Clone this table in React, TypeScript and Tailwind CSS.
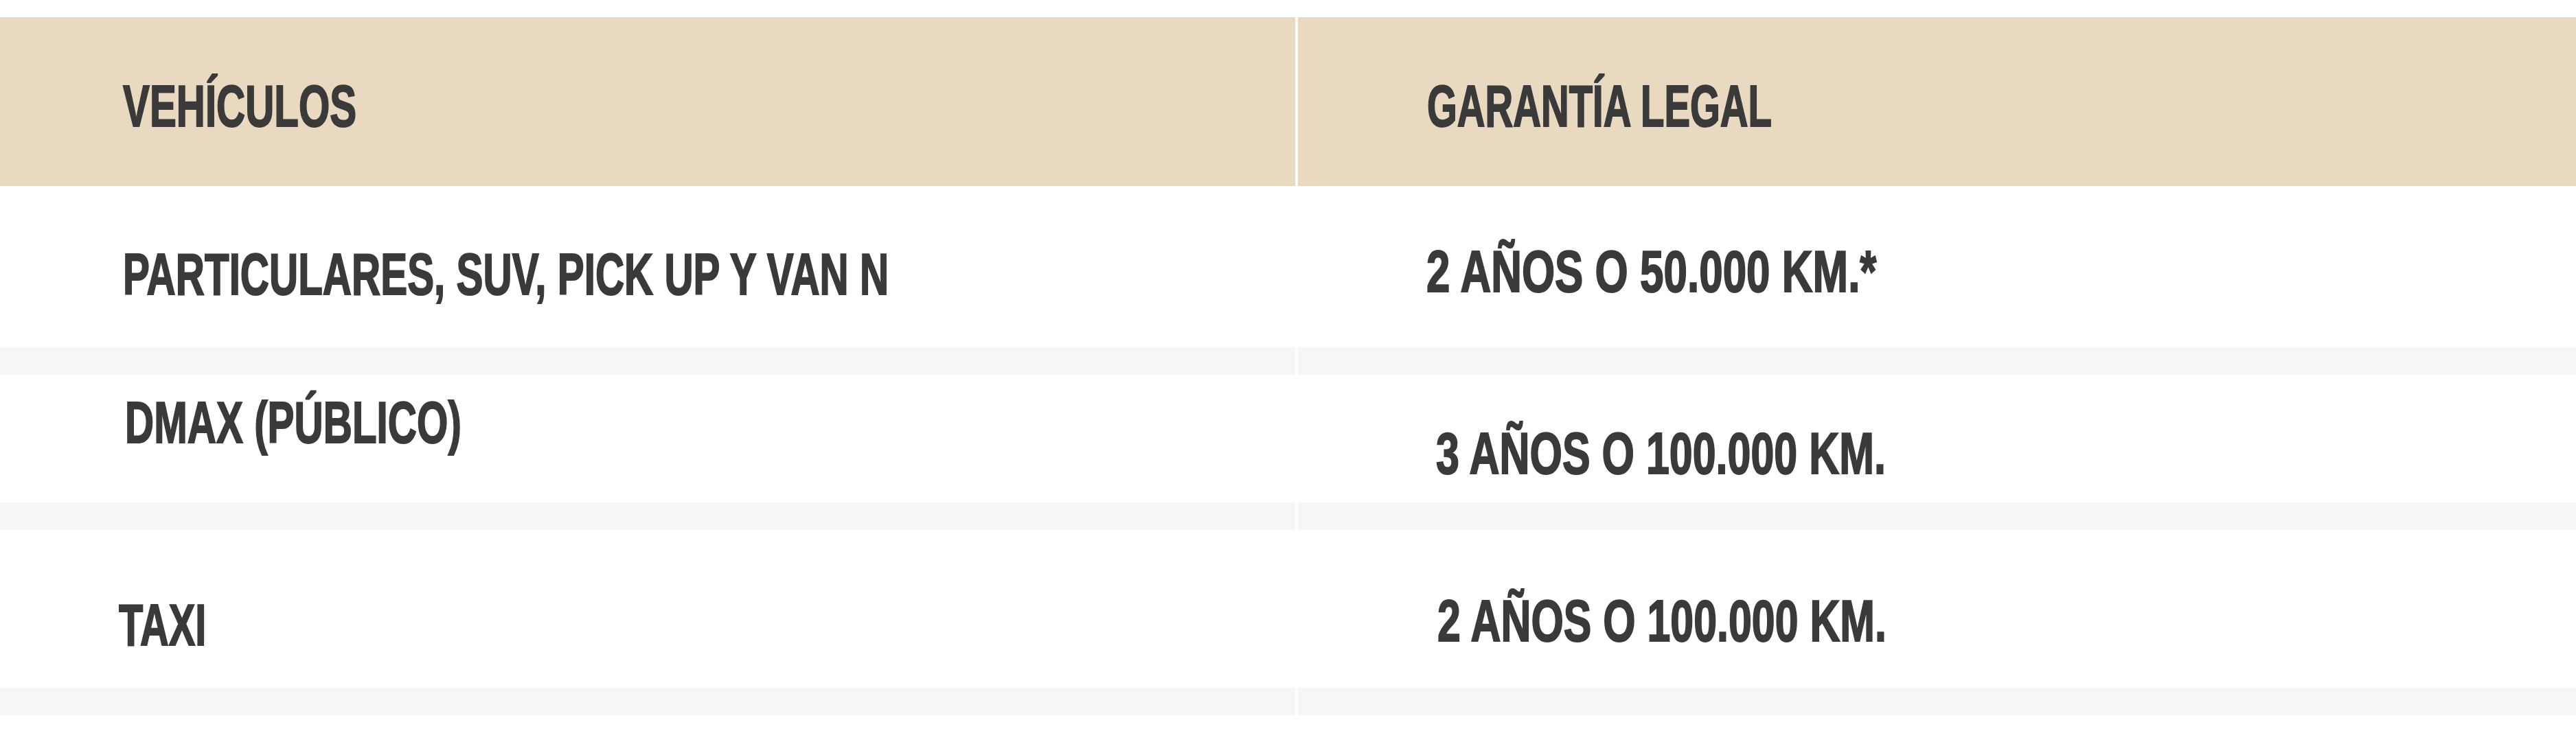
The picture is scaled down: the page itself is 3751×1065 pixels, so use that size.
import clsx from "clsx";

type Cell = {
  text: string;
  pad: string;
  scale: string;
};

type Row = {
  height: string;
  vehicle: Cell;
  warranty: Cell;
};

const HEADER: Row = {
  height: "h-[246px]",
  vehicle: { text: "VEHÍCULOS", pad: "pt-[87px] pl-[179px]", scale: "scale-x-[0.686]" },
  warranty: { text: "GARANTÍA LEGAL", pad: "pt-[87px] pl-[188px]", scale: "scale-x-[0.663]" },
};

const ROWS: Row[] = [
  {
    height: "h-[235px]",
    vehicle: { text: "PARTICULARES, SUV, PICK UP Y VAN N", pad: "pt-[86px] pl-[179px]", scale: "scale-x-[0.687]" },
    warranty: { text: "2 AÑOS O 50.000 KM.*", pad: "pt-[82px] pl-[187px]", scale: "scale-x-[0.729]" },
  },
  {
    height: "h-[186px]",
    vehicle: { text: "DMAX (PÚBLICO)", pad: "pt-[27px] pl-[182px]", scale: "scale-x-[0.687]" },
    warranty: { text: "3 AÑOS O 100.000 KM.", pad: "pt-[72px] pl-[201px]", scale: "scale-x-[0.717]" },
  },
  {
    height: "h-[230px]",
    vehicle: { text: "TAXI", pad: "pt-[96px] pl-[173px]", scale: "scale-x-[0.68]" },
    warranty: { text: "2 AÑOS O 100.000 KM.", pad: "pt-[90px] pl-[203px]", scale: "scale-x-[0.716]" },
  },
];

function TableCell({ cell, height, bg }: { cell: Cell; height: string; bg: string }) {
  return (
    <div className={clsx("leading-none", height, bg, cell.pad)}>
      <span className={clsx("inline-block origin-left whitespace-nowrap", cell.scale)}>{cell.text}</span>
    </div>
  );
}

export default function App() {
  return (
    <div className="min-h-screen bg-white pt-[25px] font-['Liberation_Sans',Arial,sans-serif] text-[85px] font-bold text-[#3a3a3a] [-webkit-text-stroke:2px_#3a3a3a]">
      <div className="grid grid-cols-[1886px_1fr] gap-x-[4px] overflow-hidden">
        <TableCell cell={HEADER.vehicle} height={HEADER.height} bg="bg-[#e9d9c0]" />
        <TableCell cell={HEADER.warranty} height={HEADER.height} bg="bg-[#e9d9c0]" />

        {ROWS.map((row) => (
          <div key={row.vehicle.text} className="contents">
            <TableCell cell={row.vehicle} height={row.height} bg="bg-white" />
            <TableCell cell={row.warranty} height={row.height} bg="bg-white" />
            <div className="h-[40px] bg-[#f6f6f8]" />
            <div className="h-[40px] bg-[#f6f6f8]" />
          </div>
        ))}
      </div>
    </div>
  );
}
